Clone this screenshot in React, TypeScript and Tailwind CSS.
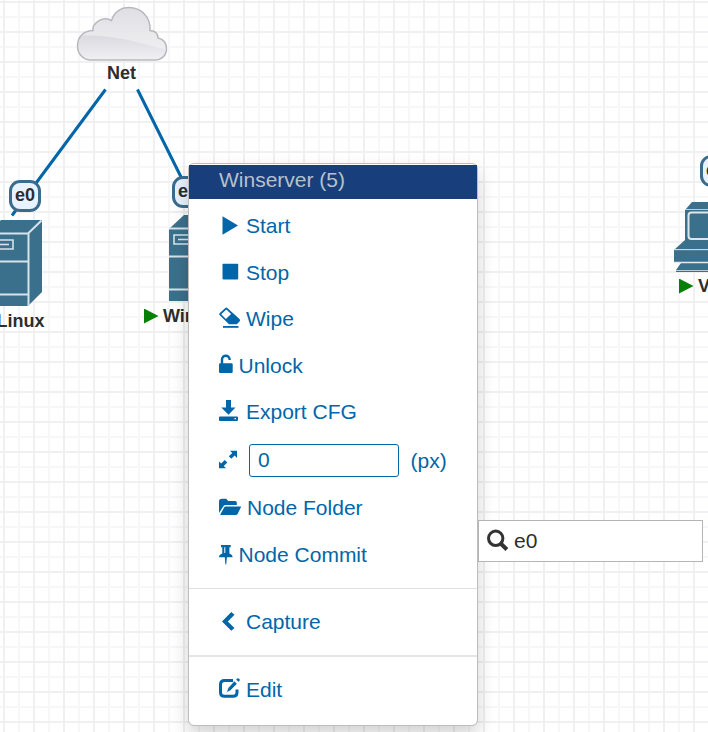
import React from "react";

type IconName =
  | "play" | "stop" | "eraser" | "unlock" | "save" | "resize" | "folder" | "pin" | "left" | "edit";

const shapes: Record<IconName, React.ReactNode> = {
  play: <path d="M3.500 2.200 19 11.500 3.500 20.700z" />,
  stop: <rect x="3.500" y="2.700" width="15.700" height="15.700" rx=".8" />,
  eraser: (
    <>
      <path fillRule="evenodd" d="M6.300.9q1-1 2 0L20.500 12q1.200 1.200 0 2.400L17.800 17.300H10L.600 8q-.9-.9 0-1.800ZM7.300 2.500 2.200 7.300l4.700 4.600 5.200-5Z" />
      <rect x="4" y="19" width="15.500" height="1.800" />
    </>
  ),
  unlock: (
    <>
      <rect x="0" y="9.300" width="13.700" height="9.700" rx="1.200" />
      <path d="M3 10V5.800C3 .3 10.700.3 10.700 6" fill="none" stroke="currentColor" strokeWidth="2.400" />
    </>
  ),
  save: (
    <path fillRule="evenodd" d="M7 0h5v7.500h4.500L9.500 14.800 2.300 7.500H7ZM1 16.500h17q1 0 1 1v2.500q0 1-1 1H1q-1 0-1-1v-2.500q0-1 1-1ZM15.500 18v1.300h1.500V18z" />
  ),
  resize: (
    <path d="M11 2.700h7v7.200l-2.300-2.300-3.400 3.100-2.500-2.500 3.500-3.200ZM0 13.500l2.200 2.100L5.700 12l2.600 2.500-3.500 3.400 2.200 2.300H0Z" />
  ),
  folder: (
    <>
      <path d="M0 17V5.500Q0 2.700 3 2.700h4.200l1.900 2.200h7q1.700 0 1.700 1.700V9H6.500q-1.200 0-1.900 1Z" />
      <path d="M6.700 10.500h15.100q.5 0 .2.500l-3.400 7q-.6 1.100-1.800 1.100H1.500q-.5 0-.2-.5l3.800-7q.5-1.100 1.600-1.100Z" />
    </>
  ),
  pin: (
    <path fillRule="evenodd" d="M2 2h9.700v2.300h-1.300v6.100c2.100.8 3.200 2 3.200 3.900H7.900L7.200 21.500h-.8L5.800 14.300H0c0-1.900 1.100-3.100 3.300-3.900V4.300H2ZM5.300 4.300V10h1V4.300z" />
  ),
  left: <path d="M12.300 2 15.500 4.800 8.800 11.600l6.700 6.300-3.200 2.900L3 11.600Z" />,
  edit: (
    <>
      <path d="M14 2.500H5.500Q1.500 2.500 1.500 6.500V14.200Q1.500 18.200 5.500 18.200H14Q18 18.200 18 14.200V11.500" fill="none" stroke="currentColor" strokeWidth="3" />
      <path d="m15.300 3.100 2.800 2.700-6.700 6.800-3.800 1.900 1.500-4.500Zm1.500-1.600 1.500-1.200q.9-.7 1.700.1l.8.800q.7.800-.1 1.600l-1.200 1.300Z" stroke="white" strokeWidth=".5" />
    </>
  ),
};

function Icon({ name, narrow }: { name: IconName; narrow?: boolean }) {
  return (
    <svg className={narrow ? "h-6 w-[19.5px] shrink-0 overflow-visible" : "h-6 w-[27px] shrink-0 overflow-visible"} viewBox={narrow ? "0 0 19.5 24" : "0 0 27 24"} fill="currentColor">
      {shapes[name]}
    </svg>
  );
}

function MenuRow({ icon, label, narrow, shift }: { icon: IconName; label: string; narrow?: boolean; shift?: boolean }) {
  return (
    <li className="flex h-[46.5px] items-center pl-[30px]">
      <Icon name={icon} narrow={narrow} />
      <span className={shift ? "pl-px" : ""}>{label}</span>
    </li>
  );
}

function Server() {
  return (
    <svg className="shrink-0" width="56" height="88" viewBox="0 0 56 88">
      <path d="M0 15 15 1h41v72L42 87H0Z" fill="#3b708c" />
      <path d="M0 14.500h42L55.500 1.500M42.500 14.500V87M0 42.500h42M0 75.500h42" fill="none" stroke="#d5e3ea" strokeWidth="2" />
      <path d="M5 21h22v9H5z" fill="none" stroke="#d5e3ea" strokeWidth="1.600" />
      <path d="M9 25.500h14" stroke="#d5e3ea" strokeWidth="1.600" />
    </svg>
  );
}

function Port() {
  return (
    <div className="flex h-8 w-8 shrink-0 items-center justify-center rounded-[11px] border-[3px] border-[#3a6c8e] bg-[#e7f3fe] pb-[3px] text-[18px] font-bold leading-none">
      e0
    </div>
  );
}

function NodeName({ name, running }: { name: string; running?: boolean }) {
  return (
    <div className="flex items-center gap-1 whitespace-nowrap text-[18px] font-bold leading-[21px]">
      {running && (
        <svg width="15" height="16" viewBox="0 0 15 16">
          <path d="M0 -.500 14.500 7 0 14.500z" fill="#068006" />
        </svg>
      )}
      <span>{name}</span>
    </div>
  );
}

const cloudPath =
  "M15 54C6 54 1.500 47 1.500 39.500 1.500 31 8 24.500 17 24.500 16 17 27 9.500 35.500 14.500 38 6 45 1.500 53 1.500 65 1.500 75 11 74 24.500 79 25 82 28 82 32 87 33 90.500 37 90.500 43 90.500 50 85 54 79 54Z";

const grid =
  "bg-[linear-gradient(to_right,#f0f0f1_2px,transparent_2px),linear-gradient(to_bottom,#f0f0f1_2px,transparent_2px),linear-gradient(to_right,#f7f7f9_2px,transparent_2px),linear-gradient(to_bottom,#f7f7f9_2px,transparent_2px)] bg-[size:30px_30px] bg-[position:3px_0px,0px_1px,18px_0px,0px_16px]";

export default function App() {
  return (
    <main className={`relative h-[732px] w-[708px] overflow-hidden bg-white font-['Liberation_Sans',Arial,sans-serif] text-[#2d2d2d] ${grid}`}>
      <svg className="absolute inset-0" width="708" height="732" viewBox="0 0 708 732">
        <path d="M105.500 89.500 12 215.500M137.500 89.500 186 187" stroke="#0066aa" strokeWidth="3" fill="none" />
      </svg>

      <div className="absolute left-[76px] top-[6px] flex w-[91px] flex-col items-center">
        <svg className="w-[92px] shrink-0 self-start overflow-visible" width="92" height="56" viewBox="0 0 92 56">
          <defs>
            <linearGradient id="cloud" x1="0" y1="0" x2="0" y2="1">
              <stop offset="0" stopColor="#dfdfe3" />
              <stop offset="1" stopColor="#f3f3f6" />
            </linearGradient>
            <linearGradient id="shade" x1="0" y1="0" x2="0" y2="1">
              <stop offset="0" stopColor="#dadadf" />
              <stop offset="1" stopColor="#f2f2f6" />
            </linearGradient>
            <clipPath id="cloudClip">
              <path d={cloudPath} />
            </clipPath>
          </defs>
          <g clipPath="url(#cloudClip)">
            <rect width="92" height="56" fill="url(#cloud)" />
            <path d="M0 30C32 27 61 36 92 44V56H0Z" fill="url(#shade)" />
          </g>
          <path d={cloudPath} fill="none" stroke="#b9b8be" strokeWidth="1.500" />
        </svg>
        <div className="pt-px">
          <NodeName name="Net" />
        </div>
      </div>

      <div className="absolute -left-[14px] top-[180px] flex flex-col items-start">
        <div className="pl-[23px]">
          <Port />
        </div>
        <div className="pt-[7px]">
          <Server />
        </div>
        <div className="pl-[10.5px] pt-1">
          <NodeName name="Linux" />
        </div>
      </div>

      <div className="absolute left-[144px] top-[176px] flex flex-col items-start">
        <div className="pl-7">
          <Port />
        </div>
        <div className="pl-[25px] pt-[6px]">
          <Server />
        </div>
        <div className="pt-[4px]">
          <NodeName name="Winserver" running />
        </div>
      </div>

      <div className="absolute left-[673px] top-[155px] flex flex-col items-start">
        <div className="pl-[27px]">
          <Port />
        </div>
        <div className="pt-[15px]">
          <svg width="80" height="70" viewBox="0 0 80 70">
            <path d="M12 8 19 0H80V40H12ZM2 47 12 38H80V47ZM1 48H80V60H1ZM3 68 8 61H80V70H3Z" fill="#3b708c" />
            <path d="M1 47.700h79M12 7.500h68M3 68.500h77" fill="none" stroke="#b9ced8" strokeWidth="1" />
            <rect x="15.500" y="10.500" width="50" height="26.500" rx="3" fill="#3b708c" stroke="#dce7ec" strokeWidth="2" />
            <path d="M1 60.500h79" stroke="#e2ebef" strokeWidth="1.500" />
          </svg>
        </div>
        <div className="pl-[6px] pt-[4px]">
          <NodeName name="VPC" running />
        </div>
      </div>

      <nav className="absolute left-[188px] top-[163px] flex h-[563px] w-[290px] flex-col rounded-[6px] border border-[#bdbdbd] bg-white bg-clip-padding pt-px text-[21px] leading-[30px] text-[#0066aa] shadow-[0_9px_18px_rgba(0,0,0,0.175)]">
        <div className="h-[34px] bg-[#183f7b] pl-[30px] text-[#b6c1cb]">Winserver (5)</div>
        <ul className="flex flex-col border-b border-[#e2e2e2] pb-[10px] pt-[4px]">
          <MenuRow icon="play" label="Start" />
          <MenuRow icon="stop" label="Stop" />
          <MenuRow icon="eraser" label="Wipe" />
          <MenuRow icon="unlock" label="Unlock" narrow />
          <MenuRow icon="save" label="Export CFG" />
          <li className="flex h-[49.5px] items-center pl-[30px]">
            <Icon name="resize" />
            <input className="ml-[3px] h-[33px] w-[150px] rounded-[3px] border border-[#0066aa] bg-white px-2 pb-px outline-none" defaultValue="0" />
            <span className="pl-[11.5px] pt-[2px]">(px)</span>
          </li>
          <MenuRow icon="folder" label="Node Folder" shift />
          <MenuRow icon="pin" label="Node Commit" narrow />
        </ul>
        <ul className="flex flex-col border-b-2 border-[#e5e5e5] pb-[9px] pt-[10px]">
          <MenuRow icon="left" label="Capture" />
        </ul>
        <ul className="flex flex-col pt-[10px]">
          <MenuRow icon="edit" label="Edit" />
        </ul>
      </nav>

      <div className="absolute left-[478px] top-[520px] flex h-[42px] w-[225px] items-center border border-[#b5b5b5] bg-white pl-2 text-[21px]">
        <svg className="h-6 w-[27px]" viewBox="0 0 27 24" fill="none" stroke="#333">
          <circle cx="8.700" cy="9.300" r="7.200" strokeWidth="3" />
          <path d="m13.700 14.500 6.200 6" strokeWidth="4" />
        </svg>
        <span>e0</span>
      </div>
    </main>
  );
}
